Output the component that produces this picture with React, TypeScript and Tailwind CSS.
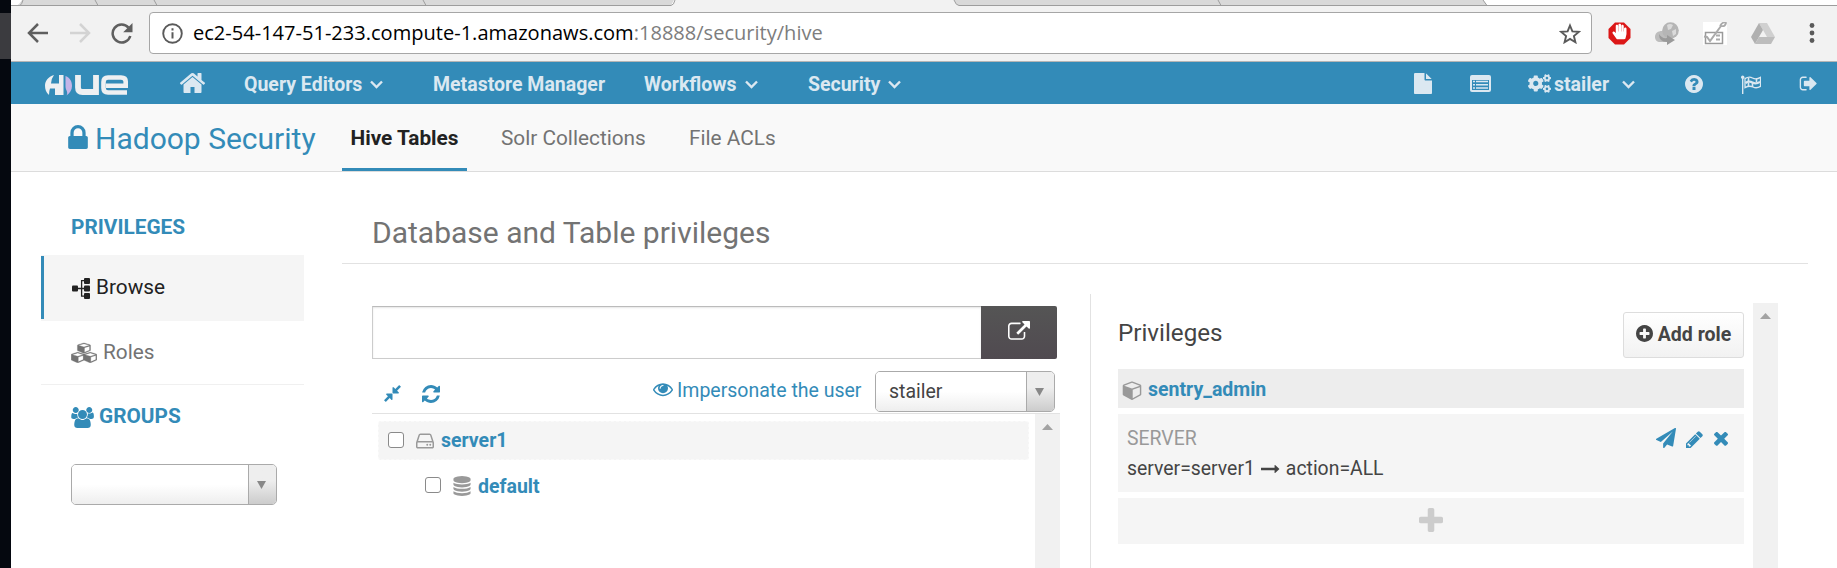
import type { ReactNode } from "react";
import { FaCogs, FaHandPaper } from "react-icons/fa";

const P = {
  lock: "M640 768h512v-192q0-106-75-181t-181-75-181 75-75 181v192zm832 96v576q0 40-28 68t-68 28h-960q-40 0-68-28t-28-68v-576q0-40 28-68t68-28h32v-192q0-184 132-316t316-132 316 132 132 316v192h32q40 0 68 28t28 68z",
  home: "M1472 992v480q0 26-19 45t-45 19h-384v-384h-256v384h-384q-26 0-45-19t-19-45v-480q0-1 .5-3t.5-3l575-474 575 474q1 2 1 6zm223-69l-62 74q-8 9-21 11h-3q-13 0-21-7l-692-577-692 577q-12 8-24 7-13-2-21-11l-62-74q-8-10-7-23.5t11-21.5l719-599q32-26 76-26t76 26l244 204v-195q0-14 9-23t23-9h192q14 0 23 9t9 23v408l219 182q10 8 11 21.5t-7 23.5z",
  plus: "M1600 736v192q0 40-28 68t-68 28h-416v416q0 40-28 68t-68 28h-192q-40 0-68-28t-28-68v-416h-416q-40 0-68-28t-28-68v-192q0-40 28-68t68-28h416v-416q0-40 28-68t68-28h192q40 0 68 28t28 68v416h416q40 0 68 28t28 68z",
  plusCircle: "M1344 960v-128q0-26-19-45t-45-19h-256v-256q0-26-19-45t-45-19h-128q-26 0-45 19t-19 45v256h-256q-26 0-45 19t-19 45v128q0 26 19 45t45 19h256v256q0 26 19 45t45 19h128q26 0 45-19t19-45v-256h256q26 0 45-19t19-45zm320-64q0 209-103 385.5t-279.5 279.5-385.5 103-385.5-103-279.5-279.5-103-385.5 103-385.5 279.5-279.5 385.5-103 385.5 103 279.5 279.5 103 385.5z",
  question: "M1024 1376v-192q0-14-9-23t-23-9h-192q-14 0-23 9t-9 23v192q0 14 9 23t23 9h192q14 0 23-9t9-23zm256-672q0-88-55.5-163t-138.5-116-170-41q-243 0-371 213-15 24 8 42l132 100q7 6 19 6 16 0 25-12 53-68 86-92 34-24 86-24 48 0 85.5 26t37.5 59q0 38-20 61t-68 45q-63 28-115.5 86.5t-52.5 125.5v36q0 14 9 23t23 9h192q14 0 23-9t9-23q0-19 21.5-49.5t54.5-49.5q32-18 49-28.5t46-35 44.5-48 28-60.5 12.5-81zm384 192q0 209-103 385.5t-279.5 279.5-385.5 103-385.5-103-279.5-279.5-103-385.5 103-385.5 279.5-279.5 385.5-103 385.5 103 279.5 279.5 103 385.5z",
  refresh: "M1639 1056q0 5-1 7-64 268-268 434.5t-478 166.5q-146 0-282.5-55t-243.5-157l-129 129q-19 19-45 19t-45-19-19-45v-448q0-26 19-45t45-19h448q26 0 45 19t19 45-19 45l-137 137q71 66 161 102t187 36q134 0 250-65t186-179q11-17 53-117 8-23 30-23h192q13 0 22.5 9.5t9.5 22.5zm25-800v448q0 26-19 45t-45 19h-448q-26 0-45-19t-19-45 19-45l138-138q-148-137-349-137-134 0-250 65t-186 179q-11 17-53 117-8 23-30 23h-199q-13 0-22.5-9.5t-9.5-22.5v-7q65-268 270-434.5t480-166.5q146 0 284 55.5t245 156.5l130-129q19-19 45-19t45 19 19 45z",
  external: "M1408 928v320q0 119-84.5 203.5t-203.5 84.5h-832q-119 0-203.5-84.5t-84.5-203.5v-832q0-119 84.5-203.5t203.5-84.5h704q14 0 23 9t9 23v64q0 14-9 23t-23 9h-704q-66 0-113 47t-47 113v832q0 66 47 113t113 47h832q66 0 113-47t47-113v-320q0-14 9-23t23-9h64q14 0 23 9t9 23zm384-864v512q0 26-19 45t-45 19-45-19l-176-176-652 652q-10 10-23 10t-23-10l-114-114q-10-10-10-23t10-23l652-652-176-176q-19-19-19-45t19-45 45-19h512q26 0 45 19t19 45z",
  eye: "M1664 960q-152-236-381-353 61 104 61 225 0 185-131.5 316.5t-316.5 131.5-316.5-131.5-131.5-316.5q0-121 61-225-229 117-381 353 133 205 333.5 326.5t434.5 121.5 434.5-121.5 333.5-326.5zm-720-384q0-20-14-34t-34-14q-125 0-214.5 89.5t-89.5 214.5q0 20 14 34t34 14 34-14 14-34q0-86 61-147t147-61q20 0 34-14t14-34zm848 384q0 34-20 69-140 230-376.5 368.5t-499.5 138.5-499.5-139-376.5-368q-20-35-20-69t20-69q140-229 376.5-368t499.5-139 499.5 139 376.5 368q20 35 20 69z",
  compress: "M896 960v448q0 26-19 45t-45 19-45-19l-144-144-332 332q-10 10-23 10t-23-10l-114-114q-10-10-10-23t10-23l332-332-144-144q-19-19-19-45t19-45 45-19h448q26 0 45 19t19 45zm755-672q0 13-10 23l-332 332 144 144q19 19 19 45t-19 45-45 19h-448q-26 0-45-19t-19-45v-448q0-26 19-45t45-19 45 19l144 144 332-332q10-10 23-10t23 10l114 114q10 10 10 23z",
  times: "M1490 1322q0 40-28 68l-136 136q-28 28-68 28t-68-28l-294-294-294 294q-28 28-68 28t-68-28l-136-136q-28-28-28-68t28-68l294-294-294-294q-28-28-28-68t28-68l136-136q28-28 68-28t68 28l294 294 294-294q28-28 68-28t68 28l136 136q28 28 28 68t-28 68l-294 294 294 294q28 28 28 68z",
  pencil: "M491 1536l91-91-235-235-91 91v107h128v128h107zm523-928q0-22-22-22-10 0-17 7l-542 542q-7 7-7 17 0 22 22 22 10 0 17-7l542-542q7-7 7-17zm-54-192l416 416-832 832h-416v-416zm683 96q0 53-37 90l-166 166-416-416 166-165q36-38 90-38 53 0 91 38l235 234q37 39 37 91z",
  database: "M896 768q237 0 443-43t325-127v170q0 69-103 128t-280 93.5-385 34.5-385-34.5-280-93.5-103-128v-170q119 84 325 127t443 43zm0 768q237 0 443-43t325-127v170q0 69-103 128t-280 93.5-385 34.5-385-34.5-280-93.5-103-128v-170q119 84 325 127t443 43zm0-384q237 0 443-43t325-127v170q0 69-103 128t-280 93.5-385 34.5-385-34.5-280-93.5-103-128v-170q119 84 325 127t443 43zm0-1152q208 0 385 34.5t280 93.5 103 128v128q0 69-103 128t-280 93.5-385 34.5-385-34.5-280-93.5-103-128v-128q0-69 103-128t280-93.5 385-34.5z",
  users: "M657 896q-162 5-265 128h-134q-82 0-138-40.5t-56-118.5q0-353 124-353 6 0 43.5 21t97.5 42.5 119 21.5q67 0 133-23-5 37-5 66 0 159 93 293zm1071 637q0 120-73 189.5t-194 69.5h-874q-121 0-194-69.5t-73-189.5q0-53 3.5-103.5t14-109 26.5-108.5 43-97.5 62-81 85.5-53.5 111.5-20q10 0 43 21.5t73 48 107 48 135 21.5 135-21.5 107-48 73-48 43-21.5q61 0 111.5 20t85.5 53.5 62 81 43 97.5 26.5 108.5 14 109 3.5 103.5zm-1024-1277q0 106-75 181t-181 75-181-75-75-181 75-181 181-75 181 75 75 181zm704 384q0 159-112.5 271.5t-271.5 112.5-271.5-112.5-112.5-271.5 112.5-271.5 271.5-112.5 271.5 112.5 112.5 271.5zm576 225q0 78-56 118.5t-138 40.5h-134q-103-123-265-128 93-134 93-293 0-29-5-66 66 23 133 23 59 0 119-21.5t97.5-42.5 43.5-21q124 0 124 353zm-128-609q0 106-75 181t-181 75-181-75-75-181 75-181 181-75 181 75 75 181z",
  hdd: "M1168 1216q0 33-23.5 56.5t-56.5 23.5-56.5-23.5-23.5-56.5 23.5-56.5 56.5-23.5 56.5 23.5 23.5 56.5zm256 0q0 33-23.5 56.5t-56.5 23.5-56.5-23.5-23.5-56.5 23.5-56.5 56.5-23.5 56.5 23.5 23.5 56.5zm112 160v-320q0-13-9.5-22.5t-22.5-9.5h-1216q-13 0-22.5 9.5t-9.5 22.5v320q0 13 9.5 22.5t22.5 9.5h1216q13 0 22.5-9.5t9.5-22.5zm-1230-480h1180l-157-482q-4-13-16-21.5t-26-8.5h-782q-14 0-26 8.5t-16 21.5zm1358 160v320q0 66-47 113t-113 47h-1216q-66 0-113-47t-47-113v-320q0-25 16-75l197-606q17-53 63-86t101-33h782q55 0 101 33t63 86l197 606q16 50 16 75z",
  signOut: "M704 1440q0 4 1 20t.5 26.5-3 23.5-10 19.5-20.5 6.5h-320q-119 0-203.5-84.5t-84.5-203.5v-704q0-119 84.5-203.5t203.5-84.5h320q13 0 22.5 9.5t9.5 22.5q0 4 1 20t.5 26.5-3 23.5-10 19.5-20.5 6.5h-320q-66 0-113 47t-47 113v704q0 66 47 113t113 47h312l11.5 1 11.5 3 8 5.5 7 9 2 13.5zm928-544q0 26-19 45l-544 544q-19 19-45 19t-45-19-19-45v-288h-448q-26 0-45-19t-19-45v-384q0-26 19-45t45-19h448v-288q0-26 19-45t45-19 45 19l544 544q19 19 19 45z",
  file: "M1152 512v-472q22 14 36 28l408 408q14 14 28 36h-472zm-128 32q0 40 28 68t68 28h544v1056q0 40-28 68t-68 28h-1344q-40 0-68-28t-28-68v-1600q0-40 28-68t68-28h800v544z",
  plane: "M1764 11q33 24 27 64l-256 1536q-5 29-32 45-14 8-31 8-11 0-24-5l-453-185-242 295q-18 23-49 23-13 0-22-4-19-7-30.5-23.5t-11.5-36.5v-349l864-1059-1069 925-395-162q-37-14-40-55-2-40 32-59l1664-960q15-9 32-9 20 0 36 11z",
  arrow: "M1728 893q0 14-10 24l-384 354q-16 14-35 6-19-9-19-29v-224h-1248q-14 0-23-9t-9-23v-192q0-14 9-23t23-9h1248v-224q0-21 19-29t35 5l384 350q10 10 10 23z",
  cube: "M896 1629l640-349v-636l-640 233v752zm-64-865l698-254-698-254-698 254zm832-252v768q0 35-18 65t-49 47l-704 384q-28 16-61 16t-61-16l-704-384q-31-17-49-47t-18-65v-768q0-40 23-73t61-47l704-256q22-8 44-8t44 8l704 256q38 14 61 47t23 73z",
};

function Icon({ name, className = "", box = "0 0 1792 1792" }: { name: keyof typeof P; className?: string; box?: string }) {
  return (
    <svg viewBox={box} fill="currentColor" className={"block shrink-0 " + className}>
      <path d={P[name]} />
    </svg>
  );
}

function Chevron({ className = "" }: { className?: string }) {
  return (
    <svg viewBox="0 0 13 9" className={"block h-[9px] w-[13px] shrink-0 " + className}>
      <path d="M1 1.500 6.500 7 12 1.500" fill="none" stroke="currentColor" strokeWidth="2.400" />
    </svg>
  );
}

function Cubes() {
  return (
    <svg viewBox="0 0 26 21" className="block h-[21px] w-[26px] shrink-0" fill="currentColor" stroke="currentColor" strokeWidth="40">
      <g transform="translate(6.400 0.200) scale(0.0079 0.0062)"><path d={P.cube} /></g>
      <g transform="translate(0.200 9.400) scale(0.0079 0.0064)"><path d={P.cube} /></g>
      <g transform="translate(12.700 9.400) scale(0.0079 0.0064)"><path d={P.cube} /></g>
    </svg>
  );
}

function Tree() {
  return (
    <svg viewBox="0 0 18 21" className="block h-[21px] w-[18px] shrink-0" fill="currentColor">
      <rect x="0" y="7.500" width="6" height="6" rx="1" />
      <rect x="12" y="0" width="6" height="6" rx="1" />
      <rect x="12" y="7.500" width="6" height="6" rx="1" />
      <rect x="12" y="15" width="6" height="6" rx="1" />
      <path d="M5 10.500h8M13 2.600h-3.400v15.600H13" fill="none" stroke="currentColor" strokeWidth="1.300" />
    </svg>
  );
}

function Flag() {
  return (
    <svg viewBox="0 0 20 19" className="block h-[19px] w-5 shrink-0" fill="none" stroke="currentColor">
      <circle cx="1.700" cy="2.200" r="1.700" fill="currentColor" stroke="none" />
      <path d="M1.700 2v17" strokeWidth="1.400" />
      <path d="M4 3.600q4-2.600 7.500-.6t8-.6v9q-4 2.400-7.500.6T4 12.600z" strokeWidth="1.300" />
      <path d="M4.500 8q3.500-2.300 7-.5t7.500-.6" strokeWidth="2.200" />
      <path d="M7.500 3v3.500M11.500 7.500v4.500M15.500 3.500v3.500M7.500 8v3.500" strokeWidth="1.600" />
    </svg>
  );
}

function Logo() {
  return (
    <svg viewBox="0 0 84 22" className="block h-[22px] w-[84px] shrink-0" fill="#eef0f2">
      <path d="M9 1C3 3 0 7 0 11.500c0 4 1 7 4 9.500q0-4 1-6.500h5V21h8.500V1H14v8.500H6Q6 5 9 1z" />
      <path d="M20.500 2c5 2 6.500 6 6.500 10s-2 7-5.500 9.500c2-4-1-5-1-9z" fill="#c5b5e8" />
      <path d="M33 1v12.500q0 4.500 4.500 4.500H51V1" fill="none" stroke="#eef0f2" strokeWidth="5.800" />
      <path d="M82 18.500H63q-4.500 0-4.500-4.500V8q0-4.500 4.500-4.500h13q4.700 0 4.700 4v4.300H61" fill="none" stroke="#eef0f2" strokeWidth="4.600" />
    </svg>
  );
}

function Select({ className, children }: { className: string; children?: ReactNode }) {
  return (
    <div className={"flex h-[41px] overflow-hidden rounded-[5px] border border-[#aaa] " + className}>
      <div className="flex grow items-center bg-linear-to-b from-white from-50% to-[#eee] pl-[13px] text-[19.5px] text-[#444]">{children}</div>
      <div className="flex w-[28px] items-center justify-center border-l border-[#aaa] bg-linear-to-b from-[#eee] from-40% to-[#ccc]">
        <svg viewBox="0 0 9 8" className="mr-[2px] block h-2 w-[9px]"><path d="M0 0h9L4.500 8z" fill="#888" /></svg>
      </div>
    </div>
  );
}

function Scrollbar() {
  return (
    <div className="flex w-[25px] shrink-0 justify-center bg-[#f1f1f1] pt-[10px]">
      <svg viewBox="0 0 11 6" className="block h-[6px] w-[11px]"><path d="M0 6h11L5.500 0z" fill="#a3a3a3" /></svg>
    </div>
  );
}

function Checkbox() {
  return <span className="mb-[2px] ml-px block size-4 shrink-0 rounded-[3px] border-[1.5px] border-[#8a8a8a] bg-white" />;
}

function BrowserChrome() {
  return (
    <div className="h-[62px] w-full border-b border-[#b5b5b5] bg-[#f2f2f2]">
      <svg viewBox="0 0 1826 6" className="block h-[6px] w-full">
        <path d="M0 0H1826V5.500H0z" fill="#fff" />
        <path d="M11 0H663L660 5.500H5Q8 5 11 0zM943 0H1472L1476 5.500H947Q944 4 943 0z" fill="#d9d9d9" />
        <path d="M664 0H943L947 6H660z" fill="#f2f2f2" />
        <path d="M0 5.500H660Q663 5 664 0M943 0Q945 5.500 948 5.500H1826M9 5.500Q11 4 12 0M84 0L87 5.500M143 0L146 5.500M412 0L415 5.500M1207 0L1210 5.500M1472 0L1476 5.500" fill="none" stroke="#9d9d9d" />
      </svg>
      <div className="flex h-[54px] items-center">
        <svg viewBox="0 0 22 20" className="ml-[16px] block h-5 w-[22px]"><path d="M11 1 2 10l9 9M2 10h19" fill="none" stroke="#5f5f5f" strokeWidth="2.500" /></svg>
        <svg viewBox="0 0 22 20" className="ml-[20px] block h-5 w-[22px]"><path d="M11 1 20 10l-9 9M20 10H1" fill="none" stroke="#d3d3d3" strokeWidth="2.500" /></svg>
        <svg viewBox="0 0 22 21" className="ml-[20px] block h-[21px] w-[22px]">
          <path d="M17.500 4.600A9 9 0 1 0 19.300 13" fill="none" stroke="#5f5f5f" strokeWidth="2.500" />
          <path d="M21.500 0v9.300h-9.300z" fill="#5f5f5f" />
        </svg>
        <div className="ml-[16px] flex h-[42px] w-[1443px] items-center rounded-[4px] border border-[#a6a6a6] bg-white pl-[12px]">
          <svg viewBox="0 0 21 21" className="block size-[21px]">
            <circle cx="10.500" cy="10.500" r="9.300" fill="none" stroke="#5a5a5a" strokeWidth="1.900" />
            <path d="M9.500 9.200h2v6.300h-2zM9.500 5.300h2v2.200h-2z" fill="#5a5a5a" />
          </svg>
          <span className="ml-[10px] font-['Open_Sans','Noto_Sans',sans-serif] text-[20.060px] whitespace-nowrap text-black">
            ec2-54-147-51-233.compute-1.amazonaws.com<span className="text-[#7d7d7d]">:18888/security/hive</span>
          </span>
          <svg viewBox="0 0 22 21" className="mr-[10px] ml-auto block h-[21px] w-[22px]"><path d="M11 2.500l2.400 5.900 6.400.5-4.900 4.100 1.500 6.200L11 15.900l-5.400 3.300 1.500-6.200L2.200 8.900l6.400-.5z" fill="none" stroke="#5a5a5a" strokeWidth="1.900" /></svg>
        </div>
        <svg viewBox="0 0 23 23" className="ml-[16px] block size-[23px]">
          <path d="M7 .5h9L22.500 7v9L16 22.500H7L.5 16V7z" fill="#dc1717" />
          <FaHandPaper x="3.500" y="1.500" width="16" height="19" color="#fff" />
        </svg>
        <svg viewBox="0 0 24 23" className="ml-[24px] block h-[23px] w-6">
          <path d="M0 15c0-4 3-6 7-6h5l6 7-5 4H5c-3 0-5-2-5-5z" fill="#bdbdbd" />
          <circle cx="15.500" cy="8.500" r="8.300" fill="#b5b5b5" />
          <path d="M12 3q3-2 6 0l-2 4-3 1zM17 9l4-2v5l-3 2z" fill="#dadada" />
          <path d="M4 12q3 5 8 4v-3l8 5-8 5v-3q-8 0-8-8z" fill="#9a9a9a" />
        </svg>
        <svg viewBox="0 0 24 23" className="ml-[24px] block h-[23px] w-6">
          <path d="M0 0h24v23H0z" fill="#fff" />
          <path d="M2.500 10.500h17v11h-17z" fill="none" stroke="#9a9a9a" strokeWidth="1.500" />
          <path d="M1 14.500l3 .5 3 4L18 4" fill="none" stroke="#aaa" strokeWidth="2" />
          <path d="M17 4q3-5 6-3-1 4-5 3M13 13.500h4M13 17.500h4" fill="none" stroke="#aaa" strokeWidth="1.800" />
        </svg>
        <svg viewBox="0 0 24 21" className="ml-[24px] block h-[21px] w-6">
          <path d="M8 0h8l8 14h-8z" fill="#d0d0d0" />
          <path d="M8 0 0 14l4 7L12 7z" fill="#b0b0b0" />
          <path d="M8 14h16l-4 7H4z" fill="#bdbdbd" />
        </svg>
        <svg viewBox="0 0 6 20" className="ml-[34px] block h-5 w-[6px]" fill="#5a5a5a"><circle cx="3" cy="2.500" r="2.400" /><circle cx="3" cy="10" r="2.400" /><circle cx="3" cy="17.500" r="2.400" /></svg>
      </div>
    </div>
  );
}

function NavBar() {
  return (
    <nav className="flex h-[42px] w-full items-center bg-[#338bb8] pt-[3px] text-[19.5px] font-bold whitespace-nowrap text-[#dbe8f1]">
      <div className="ml-[34px] w-[133px]"><Logo /></div>
      <div className="w-[66px] pb-[3px]"><Icon name="home" className="h-[28px] w-[29px]" /></div>
      <div className="flex w-[189px] items-center gap-[8px]">Query Editors<Chevron /></div>
      <div className="w-[211px]">Metastore Manager</div>
      <div className="flex w-[164px] items-center gap-[8px]">Workflows<Chevron /></div>
      <div className="flex items-center gap-[8px]">Security<Chevron /></div>
      <div className="ml-auto w-[56px] pb-[2px]"><Icon name="file" className="h-[21px] w-[18px]" box="128 0 1536 1792" /></div>
      <div className="w-[58px] pb-[2px]">
        <svg viewBox="0 0 21 17" className="block h-[17px] w-[21px]">
          <rect width="21" height="17" rx="2" fill="#dbe8f1" />
          <path d="M2 5h17v10H2z" fill="#338bb8" />
          <path d="M3 6.500h2M6 6.500h12M3 9.800h2M6 9.800h12M3 13h2M6 13h12" stroke="#dbe8f1" strokeWidth="1.500" />
        </svg>
      </div>
      <div className="flex w-[157px] items-center"><FaCogs className="mr-[3px] mb-[2px] h-[21px] w-[23px]" />stailer<Chevron className="ml-[13px]" /></div>
      <div className="w-[56px] pb-px"><Icon name="question" className="size-[18px]" box="128 128 1536 1536" /></div>
      <div className="w-[58px]"><Flag /></div>
      <Icon name="signOut" className="mr-[20px] mb-[2px] h-[15px] w-[18px]" box="0 224 1664 1344" />
    </nav>
  );
}

function SubHeader() {
  return (
    <header className="flex h-[68px] w-full border-b border-[#dcdcdc] bg-[#f9f9f9] text-[20.800px] whitespace-nowrap text-[#737373]">
      <div className="flex w-[331px] items-center pl-[57px] text-[#338bb8]">
        <Icon name="lock" className="mb-px h-[24px] w-[20px]" box="320 128 1152 1408" />
        <span className="mt-[2px] ml-[7px] text-[30px]">Hadoop Security</span>
      </div>
      <div className="mr-[34px] flex w-[125px] items-center justify-center border-b-[3px] border-[#338bb8] pt-[5px] font-bold text-[#222]">Hive Tables</div>
      <div className="flex w-[188px] items-center pt-[2px]">Solr Collections</div>
      <div className="flex items-center pt-[2px]">File ACLs</div>
    </header>
  );
}

function Sidebar() {
  return (
    <aside className="w-[331px] shrink-0 pl-[30px] text-[20.800px]">
      <div className="flex h-[83px] items-center pt-[28px] pl-[30px] font-bold text-[#338bb8]">PRIVILEGES</div>
      <div className="flex h-[66px] w-[263px] items-stretch bg-[#f5f5f5] text-[#222]">
        <span className="mt-px mb-[2px] w-[3px] bg-[#338bb8]" />
        <span className="flex items-center gap-[6px] pl-[28px]"><Tree />Browse</span>
      </div>
      <div className="flex h-[64px] w-[263px] items-center gap-[6px] border-b border-[#f0f0f0] pl-[30px] text-[#737373]"><Cubes />Roles</div>
      <div className="flex h-[64px] items-center gap-[5px] pl-[30px] font-bold text-[#338bb8]"><Icon name="users" className="h-[21px] w-[23px]" box="64 0 1920 1792" />GROUPS</div>
      <Select className="mt-[15px] ml-[30px] w-[206px]" />
    </aside>
  );
}

function DatabaseTree() {
  return (
    <section className="ml-[30px] flex w-[688px] shrink-0 flex-col pt-[42px]">
      <div className="flex h-[53px] w-[685px]">
        <div className="grow border border-r-0 border-[#ccc] border-t-[#bbb] shadow-[inset_0_1px_2px_rgba(0,0,0,0.1)]" />
        <div className="flex w-[76px] items-center justify-center rounded-r-[2px] bg-linear-to-b from-[#555] to-[#504a50] text-white"><Icon name="external" className="mb-[2px] size-[22px]" /></div>
      </div>
      <div className="flex h-[55px] w-full items-start border-b border-[#e2e2e2] pt-[12px] text-[#338bb8]">
        <Icon name="compress" className="mt-[14px] ml-[12px] size-[17px]" box="128 128 1536 1536" />
        <Icon name="refresh" className="mt-[14px] ml-[21px] size-[18px]" box="128 128 1536 1536" />
        <Icon name="eye" className="mt-[8px] ml-[213px] size-[20px]" />
        <span className="mt-[5px] ml-[4px] text-[19.5px] leading-[30px] whitespace-nowrap">Impersonate the user</span>
        <Select className="mr-[5px] ml-auto w-[180px]">stailer</Select>
      </div>
      <div className="flex grow">
        <div className="grow pt-[7px] pr-[6px] pl-[6px] text-[19.5px] font-bold text-[#338bb8]">
          <div className="flex h-[39px] items-center rounded-[3px] border border-dashed border-[#fafafa] bg-[#f5f5f5] pl-[8px]">
            <Checkbox /><Icon name="hdd" className="mr-[7px] ml-[12px] size-[18px] text-[#999]" box="128 128 1536 1536" />server1
          </div>
          <div className="flex h-[52px] items-center pl-[46px]">
            <Checkbox /><Icon name="database" className="mr-[7px] ml-[12px] h-[20px] w-[18px] text-[#999]" box="128 0 1536 1792" /><span className="pt-px">default</span>
          </div>
        </div>
        <Scrollbar />
      </div>
    </section>
  );
}

function PrivilegesPanel() {
  return (
    <section className="mt-[30px] ml-[30px] flex grow border-l border-[#e2e2e2] pt-[9px]">
      <div className="mr-[9px] ml-[27px] w-[626px] shrink-0">
        <div className="flex h-[57px] items-start justify-between pt-[9px]">
          <h2 className="text-[24.200px] leading-[43px] text-[#444]">Privileges</h2>
          <div className="flex h-[46px] w-[121px] items-center justify-center gap-[5px] rounded-[3px] border border-[#ddd] bg-linear-to-b from-white to-[#f2f2f2] text-[19.5px] font-bold whitespace-nowrap text-[#444]">
            <Icon name="plusCircle" className="mb-[3px] size-[17px]" box="128 128 1536 1536" /><span className="mb-px">Add role</span>
          </div>
        </div>
        <div className="mt-[9px] flex h-[39px] items-center bg-[#ededed] pl-[4px] text-[19.5px] font-bold text-[#338bb8]">
          <Icon name="cube" className="mt-[2px] mr-[6px] size-[20px] text-[#999]" box="0 0 1664 1792" /><span className="pt-[2px]">sentry_admin</span>
        </div>
        <div className="mt-[6px] flex h-[78px] justify-between bg-[#f5f5f5] pt-[10px] pl-[9px] text-[19.400px] leading-[30px] text-[#444]">
          <div className="whitespace-nowrap">
            <div className="text-[#999]">SERVER</div>
            <div className="flex items-center">server=server1<Icon name="arrow" className="mx-[6px] h-5 w-[19px]" />action=ALL</div>
          </div>
          <div className="mr-[16px] flex h-[30px] items-center text-[#338bb8]">
            <Icon name="plane" className="mb-[2px] size-[20px]" /><Icon name="pencil" className="ml-[10px] size-[17px]" box="128 128 1536 1536" /><Icon name="times" className="ml-[11px] size-[14px]" box="300 380 1190 1190" />
          </div>
        </div>
        <div className="mt-[6px] flex h-[46px] justify-center bg-[#f5f5f5] pt-[10px] text-[#ccc]"><Icon name="plus" className="size-[24px]" box="192 128 1408 1408" /></div>
      </div>
      <Scrollbar />
    </section>
  );
}

export default function App() {
  return (
    <div className="flex h-[568px] w-[1837px] overflow-hidden bg-white font-[Roboto,sans-serif]">
      <div className="w-[11px] shrink-0 bg-[#05080f] pt-[13px]"><div className="h-[46px] bg-[#3b3b3f]" /></div>
      <div className="flex w-[1826px] shrink-0 flex-col">
        <BrowserChrome />
        <NavBar />
        <SubHeader />
        <main className="flex grow">
          <Sidebar />
          <div className="flex w-[1466px] shrink-0 flex-col">
            <h1 className="flex h-[92px] items-center border-b border-[#e2e2e2] pt-[30px] pl-[30px] text-[30px] text-[#737373]">Database and Table privileges</h1>
            <div className="flex grow"><DatabaseTree /><PrivilegesPanel /></div>
          </div>
        </main>
      </div>
    </div>
  );
}
